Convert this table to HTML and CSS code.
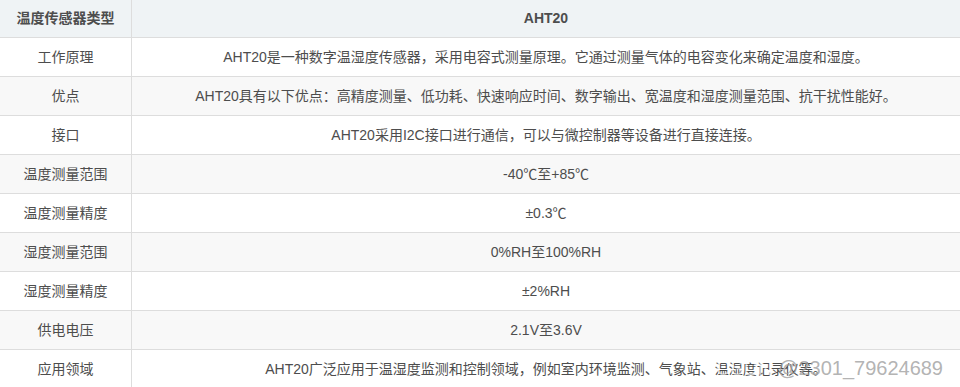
FILE: index.html
```html
<!DOCTYPE html>
<html lang="zh-CN">
<head>
<meta charset="utf-8">
<link rel="stylesheet" href="styles.css">
</head>
<body>
<div class="page">
<table class="spec">
  <colgroup><col class="c1"><col class="c2"></colgroup>
  <thead>
    <tr><th>温度传感器类型</th><th>AHT20</th></tr>
  </thead>
  <tbody>
    <tr><td>工作原理</td><td>AHT20是一种数字温湿度传感器，采用电容式测量原理。它通过测量气体的电容变化来确定温度和湿度。</td></tr>
    <tr><td>优点</td><td>AHT20具有以下优点：高精度测量、低功耗、快速响应时间、数字输出、宽温度和湿度测量范围、抗干扰性能好。</td></tr>
    <tr><td>接口</td><td>AHT20采用I2C接口进行通信，可以与微控制器等设备进行直接连接。</td></tr>
    <tr><td>温度测量范围</td><td>-40℃至+85℃</td></tr>
    <tr><td>温度测量精度</td><td>±0.3℃</td></tr>
    <tr><td>湿度测量范围</td><td>0%RH至100%RH</td></tr>
    <tr><td>湿度测量精度</td><td>±2%RH</td></tr>
    <tr><td>供电电压</td><td>2.1V至3.6V</td></tr>
    <tr><td>应用领域</td><td>AHT20广泛应用于温湿度监测和控制领域，例如室内环境监测、气象站、温湿度记录仪等。</td></tr>
  </tbody>
</table>
<div class="watermark"><span class="wm-brand">CSDN </span>@2301_79624689</div>
</div>
</body>
</html>
```

FILE: styles.css
```css
html, body {
  margin: 0;
  padding: 0;
  background: #ffffff;
  overflow: hidden;
}
.page {
  position: relative;
  width: 960px;
  height: 387px;
  overflow: hidden;
}
.spec {
  border-collapse: collapse;
  table-layout: fixed;
  width: 962px;
  margin: -2px 0 0 -1px;
  font-family: "Liberation Sans", "Noto Sans CJK SC", sans-serif;
  font-size: 14px;
  line-height: 22px;
  color: #4d4d4d;
}
.c1 { width: 132px; }
.spec th, .spec td {
  border: 1px solid #dddddd;
  padding: 8px 0;
  text-align: center;
  white-space: nowrap;
}
.spec th {
  background: #eff3f5;
  font-weight: bold;
}
.spec tbody tr:nth-child(2n) td {
  background: #f8f8f8;
}
.watermark {
  position: absolute;
  right: 17px;
  top: 355px;
  font-family: "Liberation Sans", "Noto Sans CJK SC", sans-serif;
  font-size: 20px;
  line-height: 26px;
  color: rgba(160, 160, 160, 0.8);
  white-space: nowrap;
}
.wm-brand {
  color: rgba(255, 255, 255, 0.6);
}
```
